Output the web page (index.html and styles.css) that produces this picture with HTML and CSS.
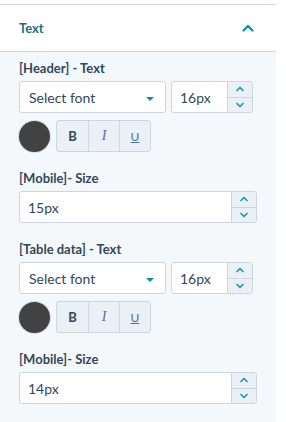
FILE: index.html
```html
<!DOCTYPE html>
<html lang="en">
<head>
    <meta charset="UTF-8">
    <meta name="viewport" content="width=device-width, initial-scale=1.0">
    <title>Text settings</title>
    <link rel="stylesheet" href="styles.css">
</head>
<body>
    <div class="panel">
        <div class="panel-head">
            <span class="panel-title">Text</span>
            <svg class="chevron-up" width="12" height="8" viewBox="0 0 12 8">
                <path d="M1.5 6.5 L6 2 L10.5 6.5" fill="none" stroke="#0091ae" stroke-width="2.2" stroke-linecap="round" stroke-linejoin="round"/>
            </svg>
        </div>

        <div class="panel-body">
            <div class="field">
                <div class="field-label">[Header] - Text</div>
                <div class="font-row">
                    <div class="select-box">
                        <span>Select font</span>
                        <span class="caret"></span>
                    </div>
                    <div class="number-input small">
                        <span class="value">16px</span>
                        <div class="stepper">
                            <div class="step"><svg width="10" height="6" viewBox="0 0 10 6"><path d="M1.5 5 L5 1.5 L8.5 5" fill="none" stroke="#0091ae" stroke-width="1.3"/></svg></div>
                            <div class="step"><svg width="10" height="6" viewBox="0 0 10 6"><path d="M1.5 1 L5 4.5 L8.5 1" fill="none" stroke="#0091ae" stroke-width="1.3"/></svg></div>
                        </div>
                    </div>
                </div>
                <div class="style-row">
                    <div class="color-swatch"></div>
                    <div class="style-buttons">
                        <button class="style-btn bold">B</button>
                        <button class="style-btn italic">I</button>
                        <button class="style-btn underline">U</button>
                    </div>
                </div>
            </div>

            <div class="field">
                <div class="field-label">[Mobile]- Size</div>
                <div class="number-input wide">
                    <span class="value">15px</span>
                    <div class="stepper">
                        <div class="step"><svg width="10" height="6" viewBox="0 0 10 6"><path d="M1.5 5 L5 1.5 L8.5 5" fill="none" stroke="#0091ae" stroke-width="1.3"/></svg></div>
                        <div class="step"><svg width="10" height="6" viewBox="0 0 10 6"><path d="M1.5 1 L5 4.5 L8.5 1" fill="none" stroke="#0091ae" stroke-width="1.3"/></svg></div>
                    </div>
                </div>
            </div>

            <div class="field">
                <div class="field-label">[Table data] - Text</div>
                <div class="font-row">
                    <div class="select-box">
                        <span>Select font</span>
                        <span class="caret"></span>
                    </div>
                    <div class="number-input small">
                        <span class="value">16px</span>
                        <div class="stepper">
                            <div class="step"><svg width="10" height="6" viewBox="0 0 10 6"><path d="M1.5 5 L5 1.5 L8.5 5" fill="none" stroke="#0091ae" stroke-width="1.3"/></svg></div>
                            <div class="step"><svg width="10" height="6" viewBox="0 0 10 6"><path d="M1.5 1 L5 4.5 L8.5 1" fill="none" stroke="#0091ae" stroke-width="1.3"/></svg></div>
                        </div>
                    </div>
                </div>
                <div class="style-row">
                    <div class="color-swatch"></div>
                    <div class="style-buttons">
                        <button class="style-btn bold">B</button>
                        <button class="style-btn italic">I</button>
                        <button class="style-btn underline">U</button>
                    </div>
                </div>
            </div>

            <div class="field">
                <div class="field-label">[Mobile]- Size</div>
                <div class="number-input wide">
                    <span class="value">14px</span>
                    <div class="stepper">
                        <div class="step"><svg width="10" height="6" viewBox="0 0 10 6"><path d="M1.5 5 L5 1.5 L8.5 5" fill="none" stroke="#0091ae" stroke-width="1.3"/></svg></div>
                        <div class="step"><svg width="10" height="6" viewBox="0 0 10 6"><path d="M1.5 1 L5 4.5 L8.5 1" fill="none" stroke="#0091ae" stroke-width="1.3"/></svg></div>
                    </div>
                </div>
            </div>
        </div>
    </div>
</body>
</html>
```

FILE: styles.css
```css
body {
    margin: 0;
    background-color: #ffffff;
    font-family: Lato, "Liberation Sans", sans-serif;
    color: #33475b;
}

.panel {
    width: 276px;
    margin-top: 4px;
    border-top: 1px solid #cbd6e2;
}

.panel-head {
    height: 46px;
    display: flex;
    align-items: center;
    justify-content: space-between;
    padding: 0 22px 0 19px;
    background-color: #ffffff;
    border-bottom: 1px solid #cbd6e2;
}

.panel-title {
    font-size: 13px;
    font-weight: 700;
    color: #1d6f80;
}

.panel-body {
    background-color: #f5f8fa;
    padding: 8px 19px 20px 19px;
}

.field {
    margin-bottom: 18px;
}

.field:last-child {
    margin-bottom: 0;
}

.field-label {
    font-size: 13px;
    font-weight: 700;
    line-height: 16px;
    margin-bottom: 5px;
}

.font-row {
    display: flex;
    gap: 5px;
}

.select-box {
    width: 147px;
    height: 32px;
    box-sizing: border-box;
    display: flex;
    align-items: center;
    justify-content: space-between;
    padding: 0 11px 0 9px;
    background-color: #ffffff;
    border: 1px solid #cbd6e2;
    border-radius: 3px;
    font-size: 14px;
}

.caret {
    width: 0;
    height: 0;
    border-left: 4px solid transparent;
    border-right: 4px solid transparent;
    border-top: 4px solid #0091ae;
    margin-top: 3px;
}

.number-input {
    height: 32px;
    box-sizing: border-box;
    display: flex;
    background-color: #ffffff;
    border: 1px solid #cbd6e2;
    border-radius: 3px;
    font-size: 14px;
}

.number-input.small {
    width: 82px;
}

.number-input.wide {
    width: 238px;
}

.number-input .value {
    flex: 1;
    display: flex;
    align-items: center;
    padding-left: 8px;
}

.stepper {
    width: 24px;
    display: flex;
    flex-direction: column;
    background-color: #eaf0f6;
    border-left: 1px solid #cbd6e2;
    border-radius: 0 3px 3px 0;
}

.step {
    flex: 1;
    display: flex;
    align-items: center;
    justify-content: center;
}

.step + .step {
    border-top: 1px solid #cbd6e2;
}

.style-row {
    display: flex;
    align-items: center;
    gap: 6px;
    margin-top: 7px;
}

.color-swatch {
    width: 31px;
    height: 31px;
    border-radius: 50%;
    background-color: #424242;
    box-shadow: 0 0 0 1px #d6dde5;
}

.style-buttons {
    display: flex;
    height: 32px;
    box-sizing: border-box;
    border: 1px solid #cbd6e2;
    border-radius: 3px;
    background-color: #eaf0f6;
    overflow: hidden;
}

.style-btn {
    width: 31px;
    height: 100%;
    padding: 0;
    border: none;
    background-color: transparent;
    font-family: Lato, "Liberation Sans", sans-serif;
    font-size: 13px;
    color: #516f90;
}

.style-btn + .style-btn {
    border-left: 1px solid #cbd6e2;
}

.style-btn.bold {
    font-weight: 700;
    color: #33475b;
}

.style-btn.italic {
    font-family: "Liberation Serif", serif;
    font-style: italic;
    font-size: 14px;
}

.style-btn.underline {
    text-decoration: underline;
    font-size: 12px;
}
```
